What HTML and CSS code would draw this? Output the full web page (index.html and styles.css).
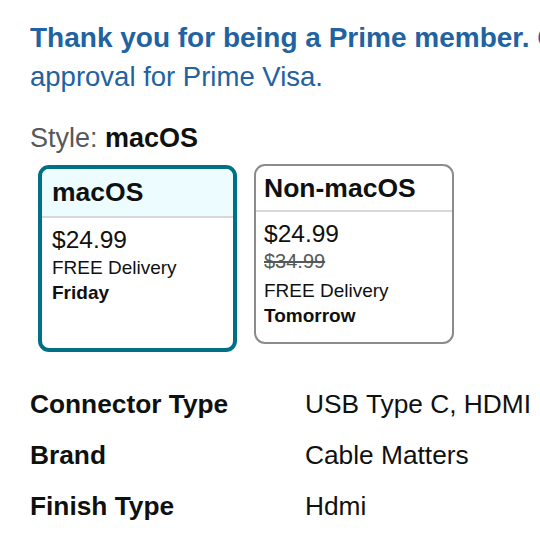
FILE: index.html
```html
<!DOCTYPE html>
<html>
<head>
<meta charset="utf-8">
<link rel="stylesheet" href="styles.css">
</head>
<body>
<div class="page">
  <div class="promo">
    <div class="promo-line"><span class="promo-bold">Thank you for being a Prime member. Get a $150 Amazon Gift Card upon</span></div>
    <div class="promo-line">approval for Prime Visa.</div>
  </div>
  <div class="style-label"><span class="style-key">Style: </span><span class="style-val">macOS</span></div>
  <div class="cards">
    <div class="card card-selected">
      <div class="card-head">macOS</div>
      <div class="card-body">
        <div class="price">$24.99</div>
        <div class="line">FREE Delivery</div>
        <div class="line bold">Friday</div>
      </div>
    </div>
    <div class="card card-plain">
      <div class="card-head">Non-macOS</div>
      <div class="card-body">
        <div class="price">$24.99</div>
        <div class="line strike">$34.99</div>
        <div class="line">FREE Delivery</div>
        <div class="line bold">Tomorrow</div>
      </div>
    </div>
  </div>
  <div class="specs">
    <div class="spec-key">Connector Type</div><div class="spec-val">USB Type C, HDMI</div>
    <div class="spec-key">Brand</div><div class="spec-val">Cable Matters</div>
    <div class="spec-key">Finish Type</div><div class="spec-val">Hdmi</div>
  </div>
</div>
</body>
</html>
```

FILE: styles.css
```css
html, body {
  margin: 0;
  padding: 0;
  background: #ffffff;
  overflow: hidden;
}
body {
  font-family: "Liberation Sans", Arial, sans-serif;
  color: #0f1111;
  width: 540px;
  height: 540px;
}
.page {
  padding: 18px 0 0 30px;
}
.promo {
  font-size: 27.5px;
  line-height: 39px;
  color: #2162a1;
}
.promo-line {
  white-space: nowrap;
  overflow: hidden;
  width: 510px;
}
.promo-bold {
  font-weight: bold;
  font-size: 28px;
}
.style-label {
  margin-top: 24px;
  font-size: 27px;
  line-height: 36px;
}
.style-key {
  color: #565959;
}
.style-val {
  font-weight: bold;
}
.cards {
  display: flex;
  align-items: flex-start;
  gap: 17px;
  margin-top: 8px;
  margin-left: 8px;
}
.card {
  box-sizing: border-box;
  width: 199px;
  border-radius: 11px;
  overflow: hidden;
  background: #ffffff;
}
.card-selected {
  border: 4px solid #007185;
  height: 187px;
  margin-top: 1px;
}
.card-plain {
  border: 2px solid #888c8c;
  width: 200px;
  height: 180px;
}
.card-head {
  font-weight: bold;
  font-size: 26.5px;
  border-bottom: 2px solid #d5d9d9;
}
.card-selected .card-head {
  background: #edfdff;
  line-height: 47px;
  padding-left: 10px;
}
.card-plain .card-head {
  line-height: 44px;
  padding-left: 8px;
}
.card-body {
  padding-top: 7px;
}
.card-selected .card-body {
  padding-left: 10px;
}
.card-plain .card-body {
  padding-left: 8px;
}
.price {
  font-size: 24.5px;
  line-height: 30px;
}
.line {
  font-size: 19px;
  line-height: 25px;
}
.bold {
  font-weight: bold;
}
.strike {
  color: #565959;
  font-size: 20px;
  text-decoration: line-through;
  margin-bottom: 4px;
}
.specs {
  display: grid;
  grid-template-columns: 275px auto;
  margin-top: 27px;
  font-size: 26.3px;
  line-height: 51px;
}
.spec-key {
  font-weight: bold;
  white-space: nowrap;
}
.spec-val {
  white-space: nowrap;
}
```
